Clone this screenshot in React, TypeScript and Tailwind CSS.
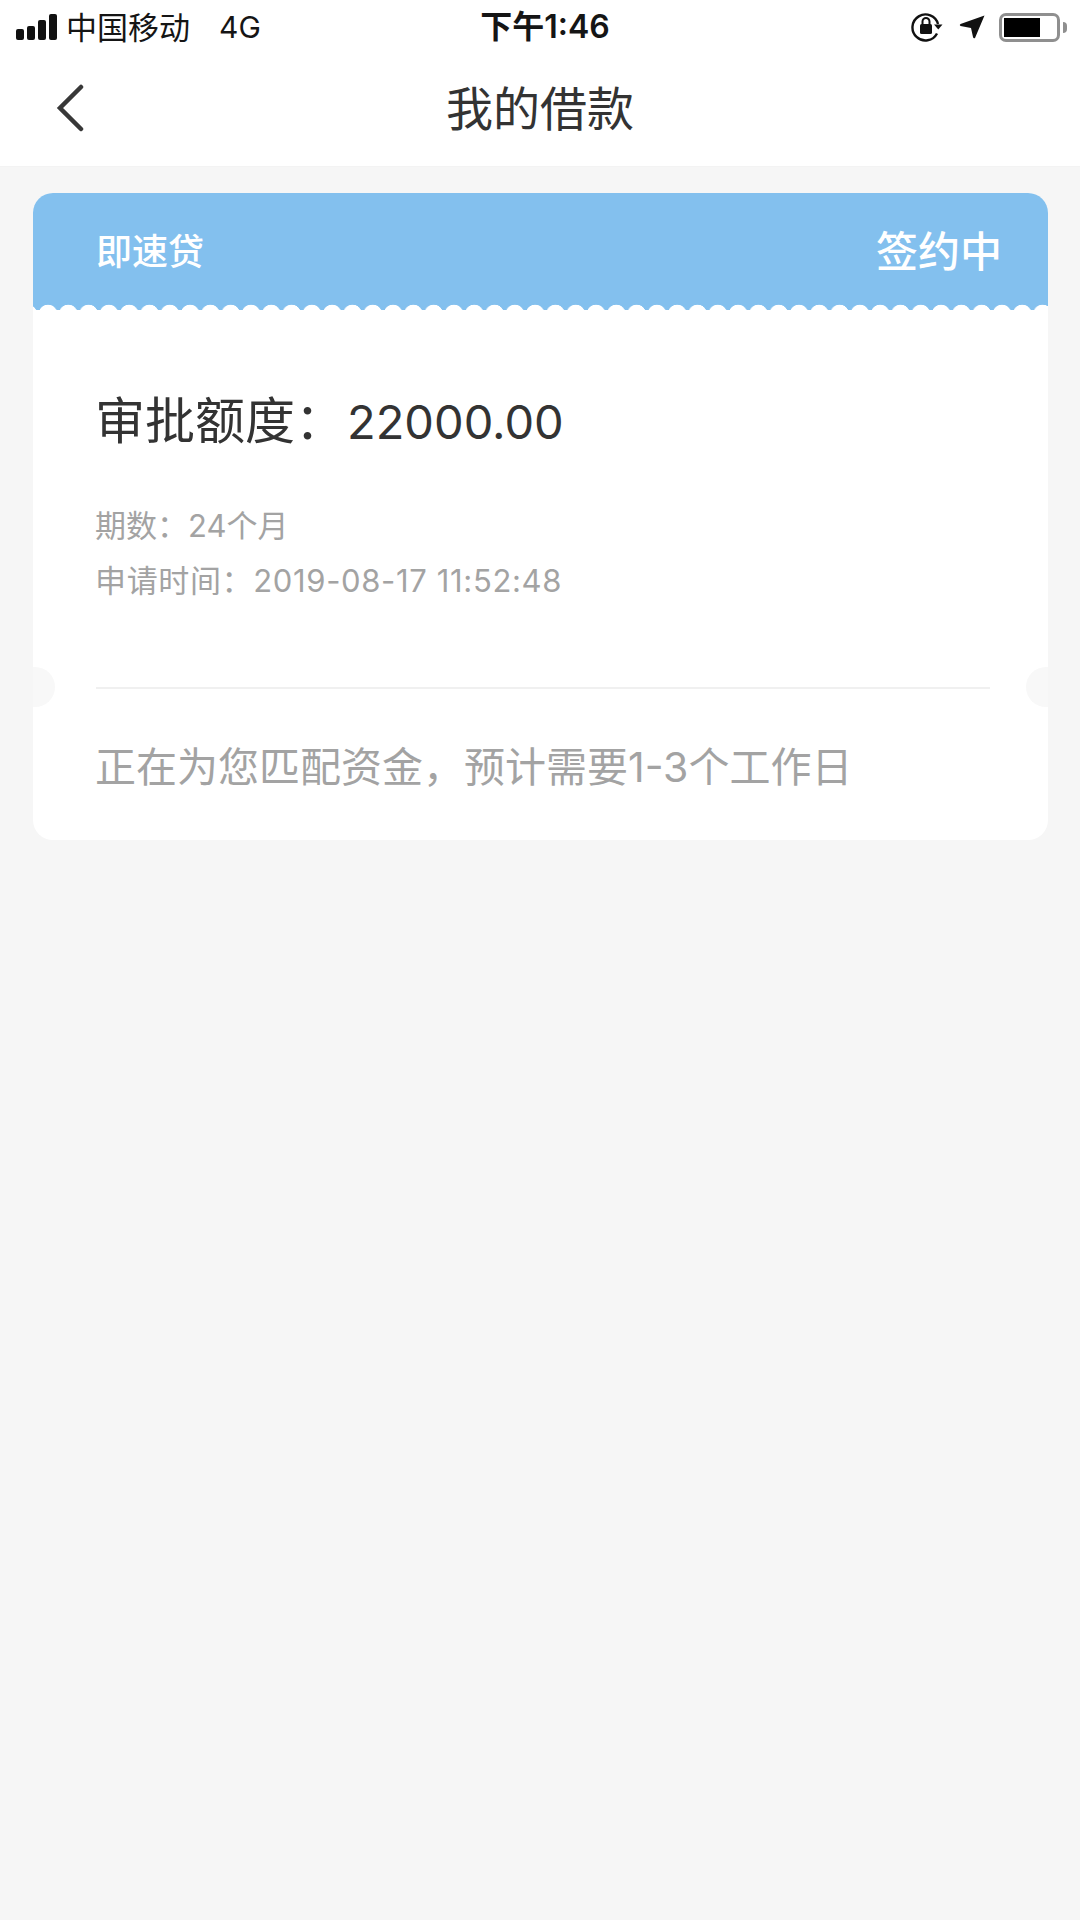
const fontStack = 'font-["Inter","Noto_Sans_CJK_SC",sans-serif]'

function StatusIcons() {
  return (
    <div className="flex items-center">
      {/* rotation lock */}
      <svg width="32" height="30" viewBox="0 0 32 30" className="mr-[16px]">
        <path d="M26 21.5A13 13 0 1 1 27 12" fill="none" stroke="#111" strokeWidth="2.4" />
        <path d="M23 12.5h8.5l-4.2 5z" fill="#111" />
        <rect x="9" y="12" width="12" height="10" rx="1.5" fill="#111" />
        <path d="M11.5 12V9.5a3.5 3.5 0 0 1 7 0V12" fill="none" stroke="#111" strokeWidth="2" />
      </svg>
      {/* location arrow */}
      <svg width="26" height="24" viewBox="0 0 26 24" className="mr-[14px]">
        <path d="M25.5 0.5 L16 23 Q14.5 24 14 22 L12 13 L1.5 11 Q0 10 1.5 9 Z" fill="#111" />
      </svg>
      {/* battery */}
      <div className="relative h-[29px] w-[61px] rounded-[7px] border-[3px] border-[#8f8f8f] p-[2px]">
        <div className="h-full w-[36px] bg-black" />
        <div className="absolute right-[-10px] top-[6px] h-[11px] w-[4px] rounded-r-full bg-[#8f8f8f]" />
      </div>
    </div>
  )
}

function SignalBars() {
  return (
    <div className="flex items-end gap-[3px]">
      <div className="h-[11px] w-[8px] rounded-[2px] bg-[#111]" />
      <div className="h-[14px] w-[8px] rounded-[2px] bg-[#111]" />
      <div className="h-[20px] w-[8px] rounded-[2px] bg-[#111]" />
      <div className="h-[26px] w-[8px] rounded-[2px] bg-[#111]" />
    </div>
  )
}

export default function App() {
  return (
    <div className={`flex min-h-[1920px] w-[1080px] flex-col bg-[#f6f6f6] ${fontStack}`}>
      {/* Status bar + nav */}
      <div className="h-[167px] border-b border-[#f3f3f3] bg-white">
        <div className="flex h-[54px] items-center justify-between pl-[16px] pr-[20px] text-[#151515]">
          <div className="flex w-[400px] items-center">
            <SignalBars />
            <span className="ml-[9px] text-[31px] leading-none">中国移动</span>
            <span className="ml-[29px] text-[30px] leading-none">4G</span>
          </div>
          <span className="ml-[14px] text-[32px] font-semibold leading-none">下午1:46</span>
          <div className="flex w-[400px] justify-end">
            <StatusIcons />
          </div>
        </div>
        <div className="relative flex h-[108px] items-center justify-center">
          <svg width="30" height="50" viewBox="0 0 30 50" className="absolute left-[56px] top-[30px]">
            <path d="M25 3 L4 24 L25 45" fill="none" stroke="#383838" strokeWidth="4.5" strokeLinecap="round" strokeLinejoin="miter" />
          </svg>
          <h1 className="text-[47px] font-normal leading-none text-[#333333]">我的借款</h1>
        </div>
      </div>

      {/* Loan card */}
      <div className="relative ml-[33px] mt-[26px] w-[1015px] overflow-hidden rounded-[20px] bg-white">
        <div className="flex h-[111px] items-center justify-between bg-[#83c0ee] pl-[63px] pr-[46px] pt-[7px] text-white">
          <span className="text-[36px] font-medium leading-none">即速贷</span>
          <span className="text-[42px] font-medium leading-none">签约中</span>
        </div>
        <div className="h-[6px] bg-[radial-gradient(circle_at_10px_10px,#ffffff_9px,#83c0ee_9.6px)] bg-[length:20.3px_6px] bg-[position:5px_0]" />

        <div className="pl-[62px] pr-[58px]">
          <div className="mt-[86px] flex items-center leading-none text-[#333333]">
            <span className="text-[50px]">审批额度：</span>
            <span className="ml-[2px] text-[47px]">22000.00</span>
          </div>
          <p className="mt-[64px] text-[31px] leading-none text-[#a3a3a3]">期数：24个月</p>
          <p className="mt-[24px] text-[31px] leading-none tracking-[0.65px] text-[#a3a3a3]">申请时间：2019-08-17 11:52:48</p>
          <div className="ml-[1px] mt-[91px] h-[2px] w-[894px] bg-[#f0f0f0]" />
          <p className="mb-[52px] mt-[58px] whitespace-nowrap text-[41px] leading-none text-[#a3a3a3]">
            正在为您匹配资金，预计需要1-3个工作日
          </p>
        </div>

        {/* ticket notches */}
        <div className="absolute left-[-18px] top-[474px] h-[40px] w-[40px] rounded-full bg-[#f8f8f8]" />
        <div className="absolute right-[-18px] top-[474px] h-[40px] w-[40px] rounded-full bg-[#f8f8f8]" />
      </div>
    </div>
  )
}
